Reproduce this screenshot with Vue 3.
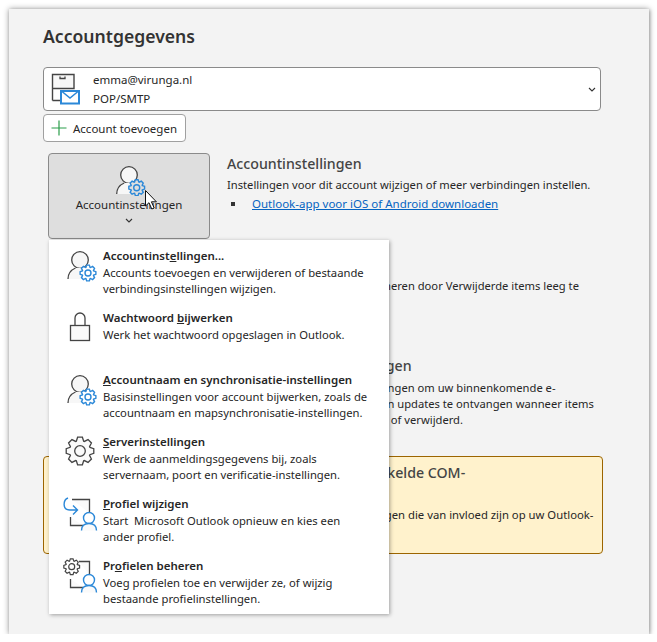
<template>
  <div class="window">
    <h1 class="title">Accountgegevens</h1>

    <div class="account-select">
      <svg class="acc-icon" width="36" height="32" viewBox="0 0 36 32">
        <path d="M1.500 27.500V1.500H23V15.500H1.500M1.500 27.500H9" fill="#f7f7f7" stroke="#444" stroke-width="1.400"/>
        <path d="M9 3.500v2h5v-2" fill="none" stroke="#444" stroke-width="1.300"/>
        <rect x="10" y="18" width="18" height="12.500" fill="#fff" stroke="#2b88d8" stroke-width="2"/>
        <path d="M11 18.500l8 6.500 8-6.500" fill="none" stroke="#2b88d8" stroke-width="1.500"/>
      </svg>
      <div class="acc-text">
        <div>emma@virunga.nl</div>
        <div>POP/SMTP</div>
      </div>
      <svg class="acc-chevron" width="8" height="5" viewBox="0 0 8 5"><path d="M1 1l3 3 3-3" fill="none" stroke="#333" stroke-width="1.100"/></svg>
    </div>

    <button class="add-btn">
      <svg width="16" height="16" viewBox="0 0 16 16"><path d="M8 .5v15M.5 8h15" stroke="#2a9d4a" stroke-width="1.200"/></svg>
      <span>Account toevoegen</span>
    </button>

    <div class="settings-row">
      <div class="big-btn">
        <svg class="big-icon" width="34" height="30" viewBox="0 0 34 30">
          <circle cx="17" cy="9" r="8.300" fill="#f7f7f7" stroke="#444" stroke-width="1.300"/>
          <path d="M4.700 28c0-5.500 3-9 8-11h8l4 11z" fill="#f7f7f7"/>
          <path d="M4.700 28c0-5.500 3-9 7.500-11" fill="none" stroke="#444" stroke-width="1.300"/>
          <path :d="gearPath(24.700, 21.700, 8, 6)" fill="#dedede" stroke="#2b88d8" stroke-width="1.400"/>
          <circle cx="24.700" cy="21.700" r="3" fill="none" stroke="#2b88d8" stroke-width="1.400"/>
        </svg>
        <div class="big-label">Accountinstellingen</div>
        <svg class="big-chev" width="8" height="5" viewBox="0 0 8 5"><path d="M1 1l3 3 3-3" fill="none" stroke="#333" stroke-width="1.100"/></svg>
      </div>
      <div class="settings-text">
        <h2>Accountinstellingen</h2>
        <p>Instellingen voor dit account wijzigen of meer verbindingen instellen.</p>
        <div class="bullet-line"><i class="bullet"></i><a class="link">Outlook-app voor iOS of Android downloaden</a></div>
      </div>
    </div>

    <div class="plain-section s2">
      <h2>Postvak opschonen</h2>
      <p>De grootte van uw postvak beheren door Verwijderde items leeg te<br>maken en te archiveren.</p>
    </div>

    <div class="plain-section s3">
      <h2>Regels en waarschuwingen</h2>
      <p>Gebruik Regels en waarschuwingen om uw binnenkomende e-<br>mailberichten beter ordenen en updates te ontvangen wanneer items<br>worden toegevoegd, gewijzigd of verwijderd.</p>
    </div>

    <div class="warn">
      <h2>Langzame en uitgeschakelde COM-<br>invoegtoepassingen</h2>
      <p>Beheer COM-invoegtoepassingen die van invloed zijn op uw Outlook-<br>ervaring.</p>
    </div>

    <div class="menu">
      <div v-for="item in items" :key="item.key" class="menu-item">
        <div class="menu-icon">
          <svg v-if="item.icon === 'person'" width="40" height="36" viewBox="0 0 40 36">
            <circle cx="20" cy="13" r="8.300" fill="#f7f7f7" stroke="#444" stroke-width="1.300"/>
            <path d="M8 32c0-5.500 3-9 8-11h8l4 11z" fill="#f7f7f7"/>
            <path d="M8 32c0-5.500 3-9 7.500-11" fill="none" stroke="#444" stroke-width="1.300"/>
            <path :d="gearPath(28, 26, 8, 6)" fill="#fff" stroke="#2b88d8" stroke-width="1.400"/>
            <circle cx="28" cy="26" r="3" fill="none" stroke="#2b88d8" stroke-width="1.400"/>
          </svg>
          <svg v-else-if="item.icon === 'lock'" width="40" height="36" viewBox="0 0 40 36">
            <path d="M15 16V9a5 5 0 0 1 10 0v7" fill="none" stroke="#444" stroke-width="1.300"/>
            <rect x="10.500" y="16.500" width="19" height="15" fill="#fafafa" stroke="#444" stroke-width="1.300"/>
          </svg>
          <svg v-else-if="item.icon === 'gear'" width="40" height="36" viewBox="0 0 40 36">
            <path :d="gearPath(20, 18, 14, 10.500)" fill="#fafafa" stroke="#444" stroke-width="1.300"/>
            <circle cx="20" cy="18" r="5.300" fill="none" stroke="#444" stroke-width="1.300"/>
          </svg>
          <svg v-else-if="item.icon === 'switch'" width="40" height="36" viewBox="0 0 40 36">
            <path d="M12 4.500h17.500V18M10.500 22v8.500H23" fill="#fafafa" stroke="#444" stroke-width="1.300"/>
            <path d="M8 3C3 5 2 15 10 15h7.500M13 10.500l4.500 4.500-4.500 4.500" fill="none" stroke="#2b88d8" stroke-width="1.400"/>
            <circle cx="29" cy="23" r="5.500" fill="#fff" stroke="#2b88d8" stroke-width="1.400"/>
            <path d="M21.500 35.500c0-4.500 3-7 7.500-7s7.500 2.500 7.500 7" fill="#fafafa" stroke="#2b88d8" stroke-width="1.400"/>
          </svg>
          <svg v-else width="40" height="36" viewBox="0 0 40 36">
            <path d="M19 4.500h10.500V18M10.500 22v8.500H23" fill="#fafafa" stroke="#444" stroke-width="1.300"/>
            <path :d="gearPath(11.700, 9.700, 8, 6)" fill="#fff" stroke="#444" stroke-width="1.200"/>
            <circle cx="11.700" cy="9.700" r="3" fill="none" stroke="#444" stroke-width="1.200"/>
            <circle cx="29" cy="23" r="5.500" fill="#fff" stroke="#2b88d8" stroke-width="1.400"/>
            <path d="M21.500 35.500c0-4.500 3-7 7.500-7s7.500 2.500 7.500 7" fill="#fafafa" stroke="#2b88d8" stroke-width="1.400"/>
          </svg>
        </div>
        <div class="menu-text">
          <div class="menu-title">{{ item.pre }}<u>{{ item.u }}</u>{{ item.post }}</div>
          <div class="menu-desc">
            <template v-for="(line, i) in item.lines" :key="i">{{ line }}<br></template>
          </div>
        </div>
      </div>
    </div>

    <svg class="cursor" width="14" height="22" viewBox="0 0 14 22">
      <path d="M.5.500v15.500l3.500-3.300 2.800 6.300 2.400-1-2.800-6.200h5z" fill="#fff" stroke="#111" stroke-width="1"/>
    </svg>
  </div>
</template>

<script setup>
const items = [
  { key: 'a', icon: 'person', pre: 'Accountinst', u: 'e', post: 'llingen...', lines: ['Accounts toevoegen en verwijderen of bestaande', 'verbindingsinstellingen wijzigen.'] },
  { key: 'b', icon: 'lock', pre: 'Wachtwoord ', u: 'b', post: 'ijwerken', lines: ['Werk het wachtwoord opgeslagen in Outlook.'] },
  { key: 'c', icon: 'person', pre: '', u: 'A', post: 'ccountnaam en synchronisatie-instellingen', lines: ['Basisinstellingen voor account bijwerken, zoals de', 'accountnaam en mapsynchronisatie-instellingen.'] },
  { key: 'd', icon: 'gear', pre: '', u: 'S', post: 'erverinstellingen', lines: ['Werk de aanmeldingsgegevens bij, zoals', 'servernaam, poort en verificatie-instellingen.'] },
  { key: 'e', icon: 'switch', pre: '', u: 'P', post: 'rofiel wijzigen', lines: ['Start  Microsoft Outlook opnieuw en kies een', 'ander profiel.'] },
  { key: 'f', icon: 'manage', pre: 'Pr', u: 'o', post: 'fielen beheren', lines: ['Voeg profielen toe en verwijder ze, of wijzig', 'bestaande profielinstellingen.'] }
]

// tandwiel met 8 tanden
function gearPath(cx, cy, outer, inner) {
  const pts = []
  for (let i = 0; i < 8; i++) {
    const a = (i * Math.PI) / 4
    const w = Math.PI / 11
    pts.push([a - w * 1.25, inner], [a - w * 0.6, outer], [a + w * 0.6, outer], [a + w * 1.25, inner])
  }
  return pts.map(([a, r], i) => `${i ? 'L' : 'M'}${(cx + r * Math.cos(a)).toFixed(2)} ${(cy + r * Math.sin(a)).toFixed(2)}`).join('') + 'Z'
}
</script>

<style>
html, body { background: #fff; }
</style>

<style scoped>
.window {
  position: relative;
  box-sizing: border-box;
  width: 640px;
  height: 625px;
  margin: 9px 0 0 9px;
  padding: 16px 0 0 34px;
  background: #f3f3f3;
  box-shadow: 0 0 6px rgba(0,0,0,0.4), 1px 1px 3px rgba(0,0,0,0.2);
  font-family: "Noto Sans", "Open Sans", sans-serif;
  font-size: 11.5px;
  color: #262626;
  overflow: hidden;
}
.title {
  margin: 0;
  font-size: 17.6px;
  line-height: 23px;
  font-weight: 600;
  color: #333;
}
h2 {
  margin: 0;
  font-size: 14.2px;
  line-height: 20px;
  font-weight: 500;
  color: #444;
}
p { margin: 0; line-height: 16px; font-size: 11.2px; white-space: nowrap; }
.account-select {
  box-sizing: border-box;
  display: flex;
  align-items: center;
  width: 558px;
  height: 44px;
  margin-top: 19px;
  border: 1px solid #8a8a8a;
  border-radius: 4px;
  background: #fff;
  padding-left: 7px;
}
.acc-icon { flex: none; }
.acc-text { margin-left: 6px; line-height: 19px; flex: 1; }
.acc-chevron { margin-right: 4px; }
.add-btn {
  display: flex;
  align-items: center;
  gap: 6px;
  box-sizing: border-box;
  width: 143px;
  height: 28px;
  margin-top: 3px;
  padding: 0 0 0 7px;
  border: 1px solid #a0a0a0;
  border-radius: 4px;
  background: #fff;
  font: inherit;
  color: inherit;
}
.settings-row { display: flex; margin: 11px 0 0 5px; }
.big-btn {
  box-sizing: border-box;
  width: 162px;
  height: 86px;
  border: 1px solid #8a8a8a;
  border-radius: 4px;
  background: #dedede;
  display: flex;
  flex-direction: column;
  align-items: center;
  padding-top: 12px;
  flex: none;
}
.big-label { line-height: 16px; margin-top: 1px; }
.big-chev { margin-top: 5px; }
.settings-text { margin-left: 17px; padding-top: 1px; }
.settings-text p { margin-top: 3px; }
.bullet-line { display: flex; align-items: center; line-height: 18px; margin-top: 2px; }
.bullet { width: 4px; height: 4px; background: #333; margin: 0 17px 0 4px; }
.link { color: #0563c1; text-decoration: underline; }
.plain-section { margin-left: 184px; }
.s2 { margin-top: 19px; }
.s3 { margin-top: 46px; }
.s3 p { margin-top: 4px; }
.warn {
  box-sizing: border-box;
  width: 560px;
  height: 98px;
  margin-top: 28px;
  padding: 6px 0 0 183px;
  background: #fff2cc;
  border: 1px solid #9c6500;
  border-radius: 4px;
}
.warn p { margin-top: 4px; font-size: 11.3px; }
.menu {
  position: absolute;
  left: 40px;
  top: 231px;
  box-sizing: border-box;
  width: 340px;
  height: 374px;
  padding-top: 6px;
  background: #fff;
  box-shadow: 1px 1px 4px rgba(0,0,0,0.35);
}
.menu-item { display: flex; height: 62px; }
.menu-icon { width: 54px; padding: 1px 0 0 11px; box-sizing: border-box; flex: none; }
.menu-icon svg { overflow: visible; }
.menu-title { font-weight: 600; line-height: 19px; }
.menu-desc { line-height: 16px; font-size: 11.25px; white-space: pre; }
.cursor { position: absolute; left: 136px; top: 181px; }
</style>
